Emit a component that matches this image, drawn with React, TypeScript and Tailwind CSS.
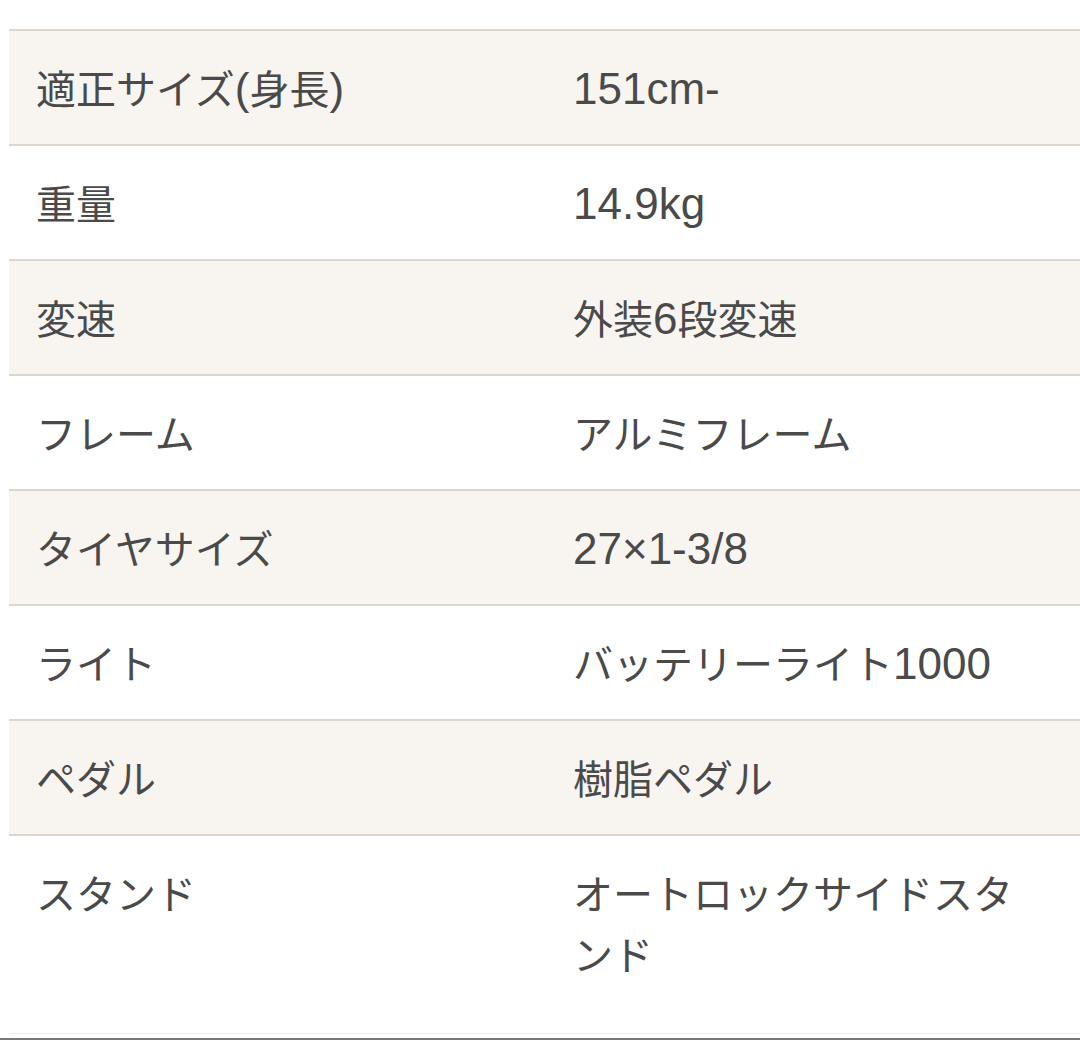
import React from "react";

const rows: [string, string][] = [
  ["適正サイズ(身長)", "151cm-"],
  ["重量", "14.9kg"],
  ["変速", "外装6段変速"],
  ["フレーム", "アルミフレーム"],
  ["タイヤサイズ", "27×1-3/8"],
  ["ライト", "バッテリーライト1000"],
  ["ペダル", "樹脂ペダル"],
  ["スタンド", "オートロックサイドスタンド"],
];

function Mixed({ text }: { text: string }) {
  const parts = text.split(/([\x20-\x7E×]+)/).filter((p) => p.length > 0);
  return (
    <>
      {parts.map((p, i) =>
        /^[\x20-\x7E×]+$/.test(p) ? (
          <span key={i} className="text-[44px] leading-none [font-family:'Liberation_Sans',Arial,sans-serif]">
            {p}
          </span>
        ) : (
          <span key={i}>{p}</span>
        )
      )}
    </>
  );
}

export default function App() {
  return (
    <div className="w-[1080px] h-[1040px] bg-white overflow-hidden relative [font-family:'Noto_Sans_CJK_JP',sans-serif] text-[#4a4a4a]">
      <div className="pt-[29px] pl-[9px]">
        {rows.map(([k, v], i) => (
          <div
            key={k}
            className={`grid grid-cols-[537px_1fr] border-t-[2px] border-[#dcd6cc] ${
              i % 2 === 0 ? "bg-[#f8f5f1]" : "bg-white"
            }`}
          >
            <div className="pl-[27px] py-[26px] text-[40px] leading-[61px]">
              <Mixed text={k} />
            </div>
            <div className="pl-[27px] pr-[60px] py-[26px] text-[40px] leading-[61px] break-all">
              <Mixed text={v} />
            </div>
          </div>
        ))}
        <div className="h-[24px] border-b border-[#f0eeeb]" />
      </div>
      <div className="absolute left-0 right-0 bottom-0 h-[2px] bg-[#777]" />
    </div>
  );
}
